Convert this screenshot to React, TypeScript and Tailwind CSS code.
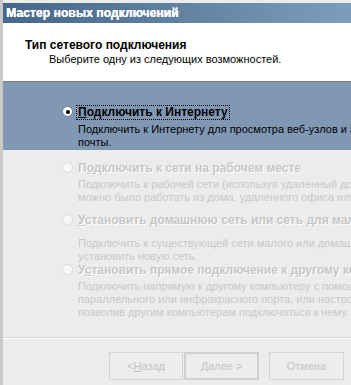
const sans = { fontFamily: '"Liberation Sans", Arial, sans-serif' };

function Radio({ checked, disabled }: { checked?: boolean; disabled?: boolean }) {
  return (
    <span
      className={
        "mt-[1px] flex h-[11px] w-[11px] shrink-0 items-center justify-center rounded-full border " +
        (disabled ? "border-[#dcdcdc] bg-[#f8f8f8]" : "border-[#6e7f93] bg-white")
      }
    >
      {checked && <span className="h-[4px] w-[4px] rounded-full bg-black" />}
    </span>
  );
}

function Option({
  label,
  lines,
  top,
  gap,
}: {
  label: React.ReactNode;
  lines: string[];
  top: string;
  gap: string;
}) {
  return (
    <div className={"flex shrink-0 flex-col " + top}>
      <div className="flex items-start gap-[5px] pl-[59px]">
        <Radio disabled />
        <span className="whitespace-nowrap text-[12px] font-bold leading-[14px] text-[#c6c6c6] [text-shadow:1px_1px_0_#ffffff]">
          {label}
        </span>
      </div>
      <div className={"flex flex-col pl-[75px] " + gap}>
        {lines.map((l) => (
          <span key={l} className="whitespace-nowrap text-[11px] leading-[13px] text-[#c8c8c8]">
            {l}
          </span>
        ))}
      </div>
    </div>
  );
}

export default function App() {
  return (
    <div style={sans} className="h-[385px] w-[351px] overflow-hidden bg-[#ececec]">
      <div className="flex h-full flex-col border-l-[3px] border-[#c9c9c9] pt-[3px]">
        <div className="flex h-[20px] shrink-0 items-center bg-gradient-to-r from-[#46668a] to-[#7c9dbb] pl-[3px]">
          <span className="text-[12px] font-bold tracking-[0.1px] text-white [text-shadow:0.4px_0_0_#ffffff]">
            Мастер новых подключений
          </span>
        </div>

        <div className="flex h-[59px] shrink-0 flex-col border-b border-[#7d7d7d] bg-white pl-[22px] pt-[15px]">
          <span className="text-[12px] font-bold leading-[14px] text-black">Тип сетевого подключения</span>
          <span className="pl-[24px] text-[11px] leading-[14px] text-black">Выберите одну из следующих возможностей.</span>
        </div>

        <div className="flex h-[68px] shrink-0 flex-col bg-[#8198b4] pt-[23px]">
          <div className="flex items-start gap-[3px] pl-[59px]">
            <Radio checked />
            <span className="whitespace-nowrap border border-dotted border-black px-[1px] text-[12px] font-bold leading-[13px] text-black">
              <span className="underline">П</span>одключить к Интернету
            </span>
          </div>
          <div className="flex flex-col pl-[75px] pt-[3px]">
            <span className="whitespace-nowrap text-[11px] leading-[13px] text-black">
              Подключить к Интернету для просмотра веб-узлов и электронной
            </span>
            <span className="text-[11px] leading-[13px] text-black">почты.</span>
          </div>
        </div>

        <Option
          top="mt-[11px]"
          gap="pt-[3px]"
          label={
            <>
              П<span className="underline">о</span>дключить к сети на рабочем месте
            </>
          }
          lines={[
            "Подключить к рабочей сети (используя удаленный доступ или VPN), чтобы",
            "можно было работать из дома, удаленного офиса или другого места.",
          ]}
        />
        <Option
          top="mt-[9px]"
          gap="pt-[10px]"
          label={
            <>
              <span className="underline">У</span>становить домашнюю сеть или сеть для малого офиса
            </>
          }
          lines={["Подключить к существующей сети малого или домашнего офиса или", "установить новую сеть."]}
        />
        <Option
          top="mt-0"
          gap="pt-[3px]"
          label={
            <>
              У<span className="underline">с</span>тановить прямое подключение к другому компьютеру
            </>
          }
          lines={[
            "Подключить напрямую к другому компьютеру с помощью последовательного,",
            "параллельного или инфракрасного порта, или настроить этот компьютер, чтобы",
            "позволив другим  компьютерам подключаться к нему.",
          ]}
        />

        <div className="mt-[18px] shrink-0 border-t border-[#d6d6d6] shadow-[0_1px_0_#ffffff]" />

        <div className="flex shrink-0 items-center justify-end gap-[10px] pr-[7px] pt-[14px]">
          <div className="flex gap-[1px]">
            <button className="flex h-[28px] w-[74px] items-center justify-center border border-[#d4d4d4] bg-[#ededed] text-[11px] text-[#c4c4c4]">
              &lt; <span className="underline">Н</span>азад
            </button>
            <button className="flex h-[28px] w-[75px] items-center justify-center border-2 border-[#cfcfcf] bg-[#ededed] text-[11px] text-[#c4c4c4]">
              <span className="underline">Д</span>алее &gt;
            </button>
          </div>
          <button className="flex h-[28px] w-[75px] items-center justify-center border border-[#d4d4d4] bg-[#ededed] text-[11px] text-[#c4c4c4]">
            Отмена
          </button>
        </div>
      </div>
    </div>
  );
}
